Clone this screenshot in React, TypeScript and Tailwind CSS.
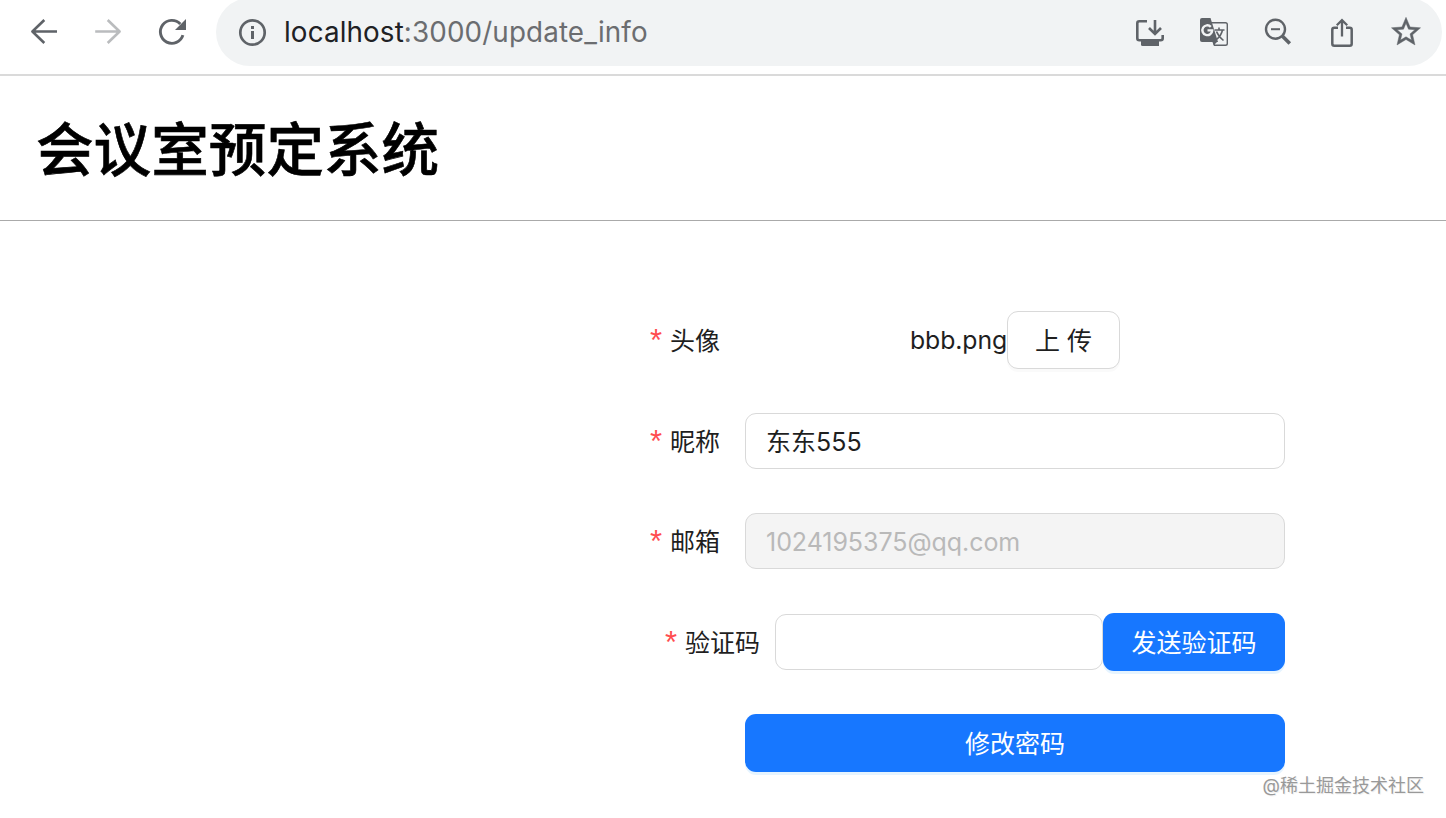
import type { ReactNode } from "react";

function Icon({ box, children }: { box: string; children: ReactNode }) {
  return (
    <svg viewBox={box} className="size-8 shrink-0" fill="none" stroke="currentColor" strokeWidth={2.6}>
      {children}
    </svg>
  );
}

function Toolbar() {
  return (
    <div className="flex h-[76px] items-start overflow-hidden border-b-2 border-[#dadada] pl-7 text-[#5f6368]">
      <div className="flex gap-8 pt-4">
        <Icon box="28 16 32 32">
          <path d="M57 31.5H32.5M44.300 20 32.400 31.500 44.300 43" strokeLinecap="butt" strokeLinejoin="round" />
        </Icon>
        <div className="text-[#babcbe]">
          <Icon box="92 16 32 32">
            <path d="M95.200 31.500H119.500M107.700 20 119.600 31.500 107.700 43" strokeLinejoin="round" />
          </Icon>
        </div>
        <Icon box="156 16 32 32">
          <path d="M182.900 35.200A11.500 11.500 0 1 1 180.300 24" strokeWidth={2.9} />
          <path d="M186 19V30H175Z" fill="currentColor" stroke="none" />
        </Icon>
      </div>
      <div className="-mt-0.5 ml-7 flex h-[68px] w-[1226px] items-center justify-between rounded-full bg-[#f1f3f4] pr-5 pl-5">
        <div className="flex items-center">
          <Icon box="236 16 32 32">
            <circle cx="252.500" cy="32.500" r="12.200" strokeWidth={2.700} />
            <path d="M252.500 26V29M252.500 31V39" strokeWidth={3} />
          </Icon>
          <span className="ml-4 font-['Inter',sans-serif] text-[27.800px] leading-8 tracking-[0.12px] whitespace-nowrap text-[#6b6d70]">
            <span className="text-[#202124]">localhost</span>:3000/update_info
          </span>
        </div>
        <div className="flex gap-8">
          <Icon box="1134 16 32 32">
            <path d="M1147 21.300H1139.300Q1137.300 21.300 1137.300 23.300V38.200Q1137.300 40.200 1139.300 40.200H1160.700Q1162.700 40.200 1162.700 38.200V35M1155 20V33.500M1149 28L1155 34L1161 28" />
            <path d="M1141 40.500H1159V46H1142.500Q1141 46 1141 44.500Z" fill="currentColor" stroke="none" />
          </Icon>
          <Icon box="1198 16 32 32">
            <path d="M1211 22.700H1225.500Q1227.300 22.700 1227.300 24.500V43.500Q1227.300 45.300 1225.500 45.300H1214.500L1212 39" strokeWidth={1.400} />
            <path d="M1202 18H1210.500L1218 42H1202Q1200 42 1200 40V20Q1200 18 1202 18Z" fill="currentColor" stroke="none" />
            <path d="M1217.500 41.500 1213.500 45.500V41.500Z" fill="currentColor" stroke="none" />
            <path d="M1210.800 26.800A4.900 4.900 0 1 0 1212.200 30.400H1207.500" stroke="#f1f3f4" strokeWidth={2.400} />
            <path d="M1214.500 30H1224.500M1219 27.500V30M1222.500 30C1221.500 34.500 1219 37.500 1216.500 39.500M1216.500 31.500C1218 35.500 1220.500 38 1223.500 40.500" strokeWidth={1.600} />
          </Icon>
          <Icon box="1262 16 32 32">
            <circle cx="1275.500" cy="29.200" r="9.500" strokeWidth={2.400} />
            <path d="M1271 29.200H1280" strokeWidth={2} />
            <path d="M1282.500 36.300 1289.800 43.600" strokeWidth={3.600} />
          </Icon>
          <Icon box="1326 16 32 32">
            <path d="M1338 27.800H1334.300Q1332.300 27.800 1332.300 29.800V43.700Q1332.300 45.700 1334.300 45.700H1349.700Q1351.700 45.700 1351.700 43.700V29.800Q1351.700 27.800 1349.700 27.800H1346" strokeWidth={2.500} />
            <path d="M1342 36.500V20.500M1336.800 25.300 1342 20.200 1347.200 25.300" strokeWidth={2.300} />
          </Icon>
          <svg viewBox="1 1.100 22 22" className="size-8 shrink-0" fill="currentColor" stroke="currentColor" strokeWidth={0.3}>
            <path d="M22 9.240l-7.190-.620L12 2 9.190 8.630 2 9.240l5.460 4.730L5.820 21 12 17.270 18.180 21l-1.630-7.030L22 9.240zM12 15.400l-3.760 2.270 1-4.280-3.320-2.880 4.380-.380L12 6.100l1.710 4.040 4.380.380-3.320 2.880 1 4.280L12 15.400z" />
          </svg>
        </div>
      </div>
    </div>
  );
}

function Label({ text }: { text: string }) {
  return (
    <label className="flex items-center pt-px whitespace-nowrap">
      <span className="mr-2 flex w-3 justify-center font-['Liberation_Sans',sans-serif] text-[31px] text-[#ff4d4f]">
        <span>*</span>
      </span>
      {text}
    </label>
  );
}

export default function App() {
  return (
    <div className="relative h-[818px] w-[1446px] overflow-hidden bg-white font-['Inter','Noto_Sans_CJK_SC',sans-serif] text-[25px] leading-[40px] text-[#1f1f1f]">
      <Toolbar />
      <header className="flex h-[145px] items-center border-b border-[#aaaaaa] pb-1 pl-9">
        <h1 className="font-['Noto_Sans_CJK_SC',sans-serif] text-[57.600px] leading-[72px] font-medium text-black [-webkit-text-stroke:0.6px_#000]">会议室预定系统</h1>
      </header>
      <form className="ml-[650px] flex w-[635px] flex-col pt-[90px]">
        <div className="flex h-[58px] items-center">
          <Label text="头像" />
          <div className="ml-[190px] flex items-center">
            <span className="w-[97px] text-[24.800px] tracking-[-0.1px] whitespace-nowrap">bbb.png</span>
            <button type="button" className="h-[58px] w-[113px] rounded-[11px] border border-[#d9d9d9] bg-white pt-0.5 whitespace-nowrap shadow-[0_3px_0_rgba(0,0,0,0.02)]">上 传</button>
          </div>
        </div>
        <div className="mt-11 flex h-14 items-center">
          <Label text="昵称" />
          <div className="ml-[25px] flex h-14 w-[540px] items-center rounded-[11px] border border-[#d9d9d9] px-5 pt-px">东东555</div>
        </div>
        <div className="mt-11 flex h-14 items-center">
          <Label text="邮箱" />
          <div className="ml-[25px] flex h-14 w-[540px] items-center rounded-[11px] border border-[#d9d9d9] bg-[#f4f4f4] px-5 pt-0.5 tracking-[-0.05px] text-[#b9b9b9]">1024195375@qq.com</div>
        </div>
        <div className="mt-11 flex h-[58px] items-center pl-[15px]">
          <Label text="验证码" />
          <div className="ml-[15px] h-14 w-[328px] rounded-[11px] border border-[#d9d9d9]" />
          <button type="button" className="h-[58px] w-[182px] rounded-[11px] bg-[#1777ff] pt-0.5 whitespace-nowrap text-white shadow-[0_3px_0_rgba(5,145,255,0.1)]">发送验证码</button>
        </div>
        <button type="button" className="mt-[43px] ml-[95px] h-[58px] w-[540px] rounded-[11px] bg-[#1777ff] pt-0.5 text-white shadow-[0_3px_0_rgba(5,145,255,0.1)]">修改密码</button>
      </form>
      <div className="absolute top-[774px] right-[22px] text-[18px] leading-6 whitespace-nowrap text-[#999] [text-shadow:1px_1px_1px_#eee]">@稀土掘金技术社区</div>
    </div>
  );
}
